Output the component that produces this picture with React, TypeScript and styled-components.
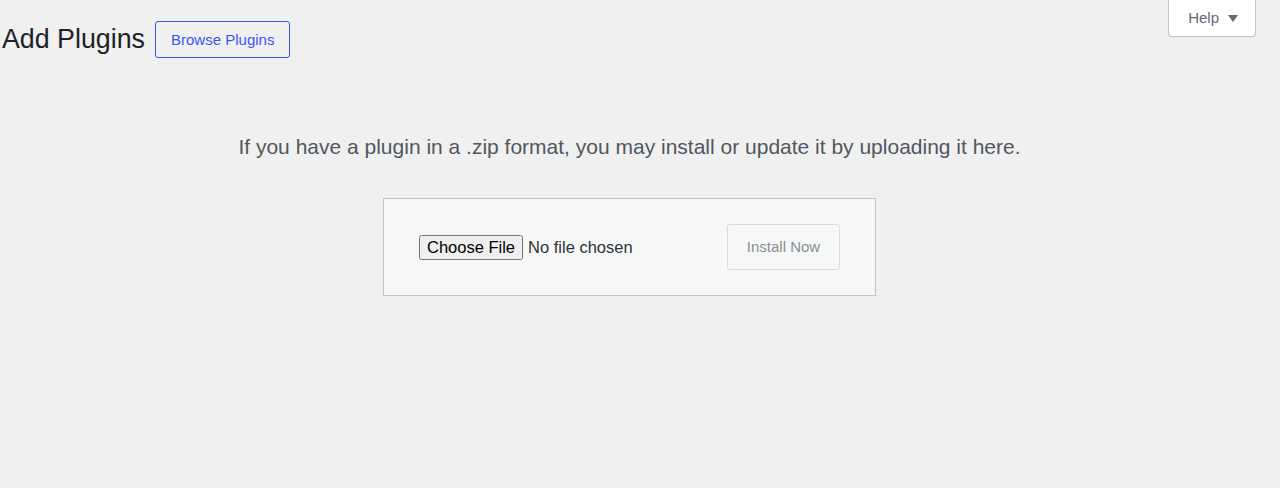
import styled, { createGlobalStyle } from "styled-components";

const GlobalStyle = createGlobalStyle`
  html, body {
    margin: 0;
    background: #f0f0f1;
    font-family: "Liberation Sans", Arial, sans-serif;
    color: #1d2327;
  }
`;

const App = () => {
  return (
    <>
      <GlobalStyle />
      <Wrap>
        <TopBar>
          <TitleRow>
            <Title>Add Plugins</Title>
            <OutlineButton>Browse Plugins</OutlineButton>
          </TitleRow>
          <HelpTab>
            Help
            <Caret viewBox="0 0 10 8" aria-hidden="true">
              <path d="M0 0h10L5 7z" fill="currentColor" />
            </Caret>
          </HelpTab>
        </TopBar>
        <UploadSection>
          <Hint>
            If you have a plugin in a .zip format, you may install or update it by uploading it here.
          </Hint>
          <UploadForm>
            <FileInput type="file" accept=".zip" />
            <DisabledButton disabled>Install Now</DisabledButton>
          </UploadForm>
        </UploadSection>
      </Wrap>
    </>
  );
};

const Wrap = styled.div`
  padding: 0 23px 0 2px;
`;

const TopBar = styled.div`
  display: flex;
  justify-content: space-between;
  align-items: flex-start;
  height: 58px;
`;

const TitleRow = styled.div`
  display: flex;
  align-items: center;
  gap: 10px;
  padding-top: 21px;
`;

const Title = styled.h1`
  margin: 0;
  font-size: 26.8px;
  font-weight: 400;
  line-height: 1.3;
  color: #1d2327;
`;

const OutlineButton = styled.button`
  height: 37px;
  padding: 0 15px;
  font-family: inherit;
  font-size: 15px;
  color: #3858e9;
  background: transparent;
  border: 1px solid #3858e9;
  border-radius: 3px;
  cursor: pointer;
`;

const HelpTab = styled.button`
  display: flex;
  align-items: center;
  gap: 9px;
  height: 38px;
  margin: -1px 1px 0 0;
  padding: 0 17px 0 19px;
  font-family: inherit;
  font-size: 15px;
  color: #646970;
  background: #fff;
  border: 1px solid #c3c4c7;
  border-top: none;
  border-radius: 0 0 4px 4px;
`;

const Caret = styled.svg`
  width: 10px;
  height: 8px;
  margin-top: 2px;
`;

const UploadSection = styled.div`
  display: flex;
  flex-direction: column;
  align-items: center;
  padding-top: 73px;
`;

const Hint = styled.p`
  margin: 0 0 35.5px;
  font-size: 21px;
  line-height: 1.5;
  color: #50575e;
`;

const UploadForm = styled.form`
  box-sizing: border-box;
  width: 493px;
  height: 98px;
  display: flex;
  align-items: center;
  justify-content: space-between;
  padding: 0 35px 0 35px;
  background: #f6f7f7;
  border: 1px solid #c3c4c7;
`;

const FileInput = styled.input`
  flex: 0 1 auto;
  min-width: 0;
  font-family: "Liberation Sans", Arial, sans-serif;
  font-size: 16.5px;
  color: #2c3338;

  &::file-selector-button {
    font-family: inherit;
    font-size: 16.5px;
    margin-right: 5px;
  }
`;

const DisabledButton = styled.button`
  flex: none;
  box-sizing: border-box;
  width: 113px;
  height: 46px;
  padding-bottom: 2px;
  font-family: inherit;
  font-size: 15px;
  color: #8c8f94;
  background: #f6f7f7;
  border: 1px solid #dcdcde;
  border-radius: 3px;
`;

export default App;
